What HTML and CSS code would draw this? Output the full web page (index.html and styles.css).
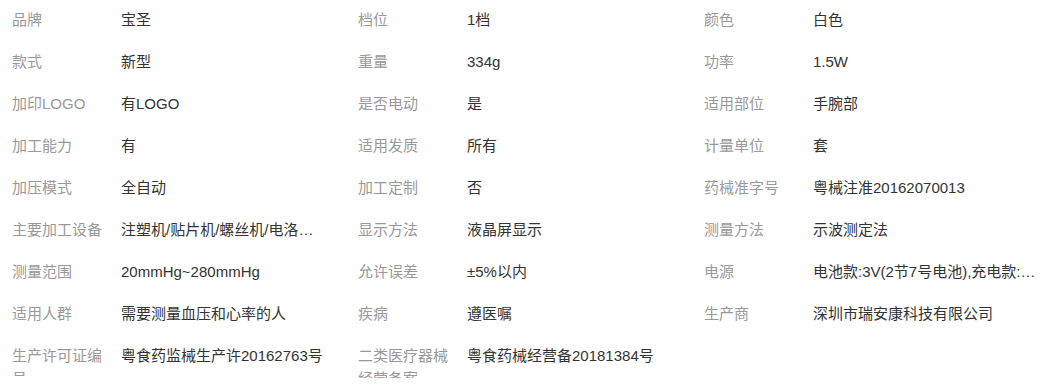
FILE: index.html
```html
<!DOCTYPE html>
<html lang="zh-CN">
<head>
<meta charset="utf-8">
<title>商品参数</title>
<link rel="stylesheet" href="styles.css">
</head>
<body>
<div class="attrs">
  <div class="item"><span class="label">品牌</span><span class="value">宝圣</span></div>
  <div class="item"><span class="label">档位</span><span class="value">1档</span></div>
  <div class="item"><span class="label">颜色</span><span class="value">白色</span></div>

  <div class="item"><span class="label">款式</span><span class="value">新型</span></div>
  <div class="item"><span class="label">重量</span><span class="value">334g</span></div>
  <div class="item"><span class="label">功率</span><span class="value">1.5W</span></div>

  <div class="item"><span class="label">加印LOGO</span><span class="value">有LOGO</span></div>
  <div class="item"><span class="label">是否电动</span><span class="value">是</span></div>
  <div class="item"><span class="label">适用部位</span><span class="value">手腕部</span></div>

  <div class="item"><span class="label">加工能力</span><span class="value">有</span></div>
  <div class="item"><span class="label">适用发质</span><span class="value">所有</span></div>
  <div class="item"><span class="label">计量单位</span><span class="value">套</span></div>

  <div class="item"><span class="label">加压模式</span><span class="value">全自动</span></div>
  <div class="item"><span class="label">加工定制</span><span class="value">否</span></div>
  <div class="item"><span class="label">药械准字号</span><span class="value">粤械注准20162070013</span></div>

  <div class="item"><span class="label">主要加工设备</span><span class="value">注塑机/贴片机/螺丝机/电洛铁/测试仪</span></div>
  <div class="item"><span class="label">显示方法</span><span class="value">液晶屏显示</span></div>
  <div class="item"><span class="label">测量方法</span><span class="value">示波测定法</span></div>

  <div class="item"><span class="label">测量范围</span><span class="value">20mmHg~280mmHg</span></div>
  <div class="item"><span class="label">允许误差</span><span class="value">±5%以内</span></div>
  <div class="item"><span class="label">电源</span><span class="value">电池款:3V(2节7号电池),充电款:USB充电</span></div>

  <div class="item"><span class="label">适用人群</span><span class="value">需要测量血压和心率的人</span></div>
  <div class="item"><span class="label">疾病</span><span class="value">遵医嘱</span></div>
  <div class="item"><span class="label">生产商</span><span class="value">深圳市瑞安康科技有限公司</span></div>

  <div class="item"><span class="label">生产许可证编号</span><span class="value">粤食药监械生产许20162763号</span></div>
  <div class="item"><span class="label">二类医疗器械经营备案</span><span class="value">粤食药械经营备20181384号</span></div>
</div>
</body>
</html>
```

FILE: styles.css
```css
html, body {
  margin: 0;
  padding: 0;
  background: #ffffff;
}

body {
  font-family: "Liberation Sans", Arial, "Noto Sans CJK SC", sans-serif;
  font-size: 15px;
  line-height: 23px;
}

.attrs {
  display: grid;
  grid-template-columns: 346px 346px 1fr;
  grid-auto-rows: 42px;
  padding-left: 12px;
}

.item {
  display: flex;
  align-items: flex-start;
  padding-top: 8px;
  min-width: 0;
}

.label {
  flex: 0 0 97px;
  margin-right: 12px;
  color: #999999;
  word-break: break-all;
}

.value {
  flex: 1 1 auto;
  min-width: 0;
  color: #333333;
  white-space: nowrap;
  overflow: hidden;
  text-overflow: ellipsis;
  padding-right: 32px;
}

.item:nth-child(3n) .value {
  flex: 0 1 226px;
  padding-right: 0;
}
```
